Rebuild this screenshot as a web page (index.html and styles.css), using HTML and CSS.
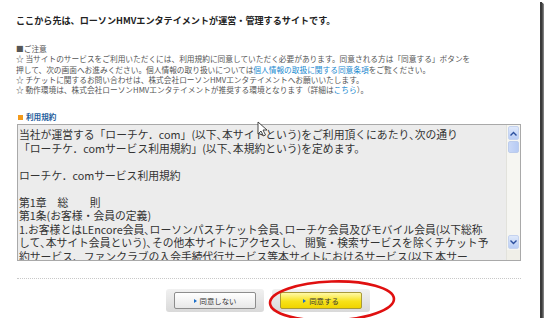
FILE: index.html
```html
<!DOCTYPE html>
<html lang="ja">
<head>
  <meta charset="UTF-8">
  <title>利用規約</title>
  <link rel="stylesheet" href="styles.css">
</head>
<body>
<div class="frame">
  <p class="lead">ここから先は、ローソンHMVエンタテイメントが運営・管理するサイトです。</p>

  <div class="notice">
    <p class="notice-title">■ご注意</p>
    <p>☆ 当サイトのサービスをご利用いただくには、利用規約に同意していただく必要があります。同意される方は「同意する」ボタンを<br>押して、次の画面へお進みください。個人情報の取り扱いについては<a href="#">個人情報の取扱に関する同意条項</a>をご覧ください。</p>
    <p>☆ チケットに関するお問い合わせは、株式会社ローソンHMVエンタテイメントへお願いいたします。</p>
    <p>☆ 動作環境は、株式会社ローソンHMVエンタテイメントが推奨する環境となります（詳細は<a href="#">こちら</a>）。</p>
  </div>

  <div class="terms-head"><span class="sq"></span>利用規約</div>
  <div class="terms">
    <div class="terms-text">
      <p>当社が運営する「ローチケ．com」(以下､本サイトという)をご利用頂くにあたり､次の通り</p>
      <p>「ローチケ．comサービス利用規約」(以下､本規約という)を定めます。</p>
      <p>&nbsp;</p>
      <p>ローチケ．comサービス利用規約</p>
      <p>&nbsp;</p>
      <p>第1章　総　　則</p>
      <p>第1条(お客様・会員の定義)</p>
      <p>1.お客様とはLEncore会員､ローソンパスチケット会員､ローチケ会員及びモバイル会員(以下総称</p>
      <p>して､本サイト会員という)､その他本サイトにアクセスし、 閲覧・検索サービスを除くチケット予</p>
      <p>約サービス、ファンクラブの入会手続代行サービス等本サイトにおけるサービス(以下 本サー</p>
    </div>
    <div class="scroll">
      <span class="sb-btn">
        <svg width="7" height="5" viewBox="0 0 7 5"><path d="M0.5 4.5L3.5 1.5L6.5 4.5" fill="none" stroke="#2b4f9e" stroke-width="1.4"/></svg>
      </span>
      <span class="sb-thumb"></span>
      <span class="sb-track"></span>
      <span class="sb-btn">
        <svg width="7" height="5" viewBox="0 0 7 5"><path d="M0.5 0.5L3.5 3.5L6.5 0.5" fill="none" stroke="#2b4f9e" stroke-width="1.4"/></svg>
      </span>
      <span class="sb-corner"></span>
    </div>
  </div>

  <div class="sep"></div>

  <div class="actions">
    <span class="plate"><button class="btn" type="button"><i class="tri"></i>同意しない</button></span>
    <span class="plate"><button class="btn btn-yes" type="button"><i class="tri"></i>同意する</button></span>
  </div>

  <svg class="mark" width="130" height="44" viewBox="0 0 130 44">
    <ellipse cx="65" cy="22" rx="62" ry="19.5" fill="none" stroke="#e01010" stroke-width="2.6" transform="rotate(-2 65 22)"/>
  </svg>
  <svg class="cursor" width="12" height="16" viewBox="0 0 12 16">
    <path d="M1 1L1 13L4 10L6.5 15L8.5 14L6 9L10 9Z" fill="#fff" stroke="#333" stroke-width="0.9"/>
  </svg>
</div>
</body>
</html>
```

FILE: styles.css
```css
body {
  margin: 0;
  background: #fff;
  font-family: "Noto Sans CJK JP", "Noto Sans", sans-serif;
}
p {
  margin: 0;
}
.frame {
  position: relative;
  width: 524px;
  height: 318px;
  padding-left: 16px;
  background: #fff;
  box-shadow: 2px 2px 0 #3a3a3a, 3px 3px 1px #555, 4px 4px 1px #888;
  overflow: hidden;
}
.lead {
  padding-top: 14px;
  font-size: 9.1px;
  line-height: 12px;
  font-weight: bold;
  color: #222;
}
.notice {
  margin-top: 18px;
  font-size: 7.7px;
  line-height: 10.3px;
  color: #555;
}
.notice a {
  color: #1b8ad0;
  text-decoration: none;
}
.terms-head {
  display: flex;
  align-items: center;
  gap: 3px;
  margin-top: 17px;
  padding-left: 2px;
  font-size: 7.6px;
  line-height: 10px;
  font-weight: bold;
  color: #1f5d9c;
}
.sq {
  width: 5px;
  height: 5px;
  background: #f39a1a;
}
.terms {
  display: flex;
  width: 502px;
  height: 135px;
  margin-top: 2px;
  margin-left: 1px;
  border: 1px solid #a9a9a9;
  background: #ececec;
  overflow: hidden;
}
.terms-text {
  flex: 1;
  padding: 3px 0 0 1px;
  font-size: 10.8px;
  line-height: 13.5px;
  color: #333;
  white-space: nowrap;
  overflow: hidden;
}
.scroll {
  display: flex;
  flex-direction: column;
  width: 13px;
  background: #f6f6f2;
  border-left: 1px solid #e2e2dc;
}
.sb-btn {
  display: flex;
  align-items: center;
  justify-content: center;
  height: 12px;
  margin: 1px;
  border-radius: 2px;
  background: linear-gradient(#dfe9fb, #b9cdf5);
  border: 1px solid #c5d3ef;
}
.sb-thumb {
  height: 10px;
  margin: 0 1px;
  border-radius: 2px;
  background: linear-gradient(90deg, #c9d8f7, #b7cbf4);
  border: 1px solid #bcccec;
}
.sb-track {
  flex: 1;
}
.sb-corner {
  height: 10px;
  background: #f0efe8;
}
.sep {
  width: 504px;
  margin-top: 17px;
  margin-left: 1px;
  border-top: 1px dotted #c8c8c8;
}
.actions {
  display: flex;
  justify-content: center;
  gap: 8px;
  margin-top: 10px;
  padding-right: 20px;
}
.plate {
  display: flex;
  padding: 3px 8px;
  border-radius: 3px;
  background: linear-gradient(#f1f1f1, #d9d9d9);
}
.btn {
  display: flex;
  align-items: center;
  justify-content: center;
  gap: 3px;
  width: 82px;
  height: 17px;
  padding: 0;
  border: 1px solid #8d8d8d;
  border-radius: 2px;
  background: linear-gradient(#ffffff, #e8e8e8);
  font-family: "Noto Sans CJK JP", sans-serif;
  font-size: 7.4px;
  color: #333;
}
.btn-yes {
  border-color: #a89a3a;
  background: linear-gradient(#fff9a8, #f7e21a 55%, #f0d400);
}
.tri {
  width: 0;
  height: 0;
  border-left: 3px solid #1b6fc8;
  border-top: 2.5px solid transparent;
  border-bottom: 2.5px solid transparent;
}
.mark {
  position: absolute;
  left: 267px;
  top: 279px;
}
.cursor {
  position: absolute;
  left: 257px;
  top: 121px;
}
```
